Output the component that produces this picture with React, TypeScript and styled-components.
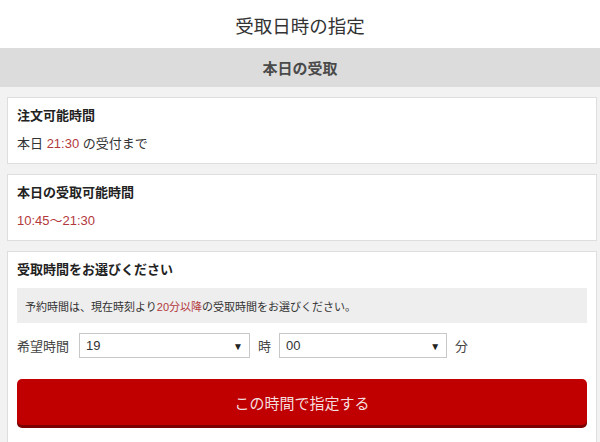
import React, { useState } from 'react';
import styled, { createGlobalStyle } from 'styled-components';

const GlobalStyle = createGlobalStyle`
  html, body {
    margin: 0;
    padding: 0;
    background: #f2f2f2;
    font-family: "Liberation Sans", "Noto Sans CJK JP", sans-serif;
    color: #222;
  }
  * { box-sizing: border-box; }
`;

const Page = styled.div`
  width: 600px;
  min-height: 442px;
  background: #f2f2f2;
`;

const TitleBar = styled.h1`
  margin: 0;
  height: 48px;
  background: #fff;
  display: flex;
  align-items: center;
  justify-content: center;
  font-size: 18.5px;
  font-weight: normal;
  color: #333;
  padding-top: 2px;
`;

const Band = styled.h2`
  margin: 0;
  height: 39px;
  background: #dcdcdc;
  display: flex;
  align-items: center;
  justify-content: center;
  font-size: 15px;
  font-weight: bold;
  color: #4a4a4a;
`;

const Content = styled.div`
  padding: 10px 3px 0 7px;
  display: flex;
  flex-direction: column;
  gap: 10px;
`;

const Card = styled.section`
  background: #fff;
  border: 1px solid #dedede;
  padding: 8px 9px 9px 9px;
`;

const CardTitle = styled.h3`
  margin: 0;
  font-size: 13px;
  line-height: 20px;
  font-weight: bold;
  color: #222;
`;

const CardText = styled.p`
  margin: 8px 0 0;
  font-size: 13px;
  line-height: 20px;
  color: #333;
`;

const Red = styled.span`
  color: #b3383c;
`;

const Notice = styled.div`
  margin-top: 8px;
  height: 35px;
  background: #eeeeee;
  display: flex;
  align-items: center;
  padding: 0 8px;
  font-size: 11px;
  color: #333;
`;

const TimeRow = styled.div`
  margin-top: 10px;
  display: flex;
  align-items: center;
  gap: 8px;
  font-size: 13px;
  color: #444;
`;

const Label = styled.span<{ $gap?: number }>`
  margin-right: ${p => p.$gap ?? 0}px;
`;

const SelectWrap = styled.div<{ $w: number }>`
  position: relative;
  width: ${p => p.$w}px;
  height: 25px;
`;

const Select = styled.select`
  appearance: none;
  -webkit-appearance: none;
  width: 100%;
  height: 100%;
  border: 1px solid #c8c8c8;
  border-radius: 0;
  background: #fff;
  padding: 0 6px;
  font-family: "Liberation Sans", "Noto Sans CJK JP", sans-serif;
  font-size: 13px;
  color: #333;
  outline: none;
`;

const Arrow = styled.span`
  position: absolute;
  right: 7px;
  top: 50%;
  transform: translateY(-50%);
  font-size: 10px;
  color: #222;
  pointer-events: none;
`;

const Submit = styled.button`
  margin-top: 21px;
  width: 100%;
  height: 46px;
  border: none;
  border-radius: 5px;
  background: #c00000;
  box-shadow: 0 3px 0 #7d0000;
  color: #f5dede;
  font-family: "Liberation Sans", "Noto Sans CJK JP", sans-serif;
  font-size: 15px;
  cursor: pointer;
  margin-bottom: 14px;
`;

const hours = ['10', '11', '12', '13', '14', '15', '16', '17', '18', '19', '20', '21'];
const minutes = ['00', '15', '30', '45'];

const App: React.FC = () => {
  const [hour, setHour] = useState('19');
  const [minute, setMinute] = useState('00');

  return (
    <Page>
      <GlobalStyle />
      <TitleBar>受取日時の指定</TitleBar>
      <Band>本日の受取</Band>
      <Content>
        <Card>
          <CardTitle>注文可能時間</CardTitle>
          <CardText>本日 <Red>21:30</Red> の受付まで</CardText>
        </Card>
        <Card>
          <CardTitle>本日の受取可能時間</CardTitle>
          <CardText><Red>10:45～21:30</Red></CardText>
        </Card>
        <Card>
          <CardTitle>受取時間をお選びください</CardTitle>
          <Notice>
            予約時間は、現在時刻より<Red>20分以降</Red>の受取時間をお選びください。
          </Notice>
          <TimeRow>
            <Label $gap={2}>希望時間</Label>
            <SelectWrap $w={171}>
              <Select value={hour} onChange={e => setHour(e.target.value)}>
                {hours.map(h => <option key={h} value={h}>{h}</option>)}
              </Select>
              <Arrow>▼</Arrow>
            </SelectWrap>
            <Label>時</Label>
            <SelectWrap $w={168}>
              <Select value={minute} onChange={e => setMinute(e.target.value)}>
                {minutes.map(m => <option key={m} value={m}>{m}</option>)}
              </Select>
              <Arrow>▼</Arrow>
            </SelectWrap>
            <Label>分</Label>
          </TimeRow>
          <Submit>この時間で指定する</Submit>
        </Card>
      </Content>
    </Page>
  );
};

export default App;
